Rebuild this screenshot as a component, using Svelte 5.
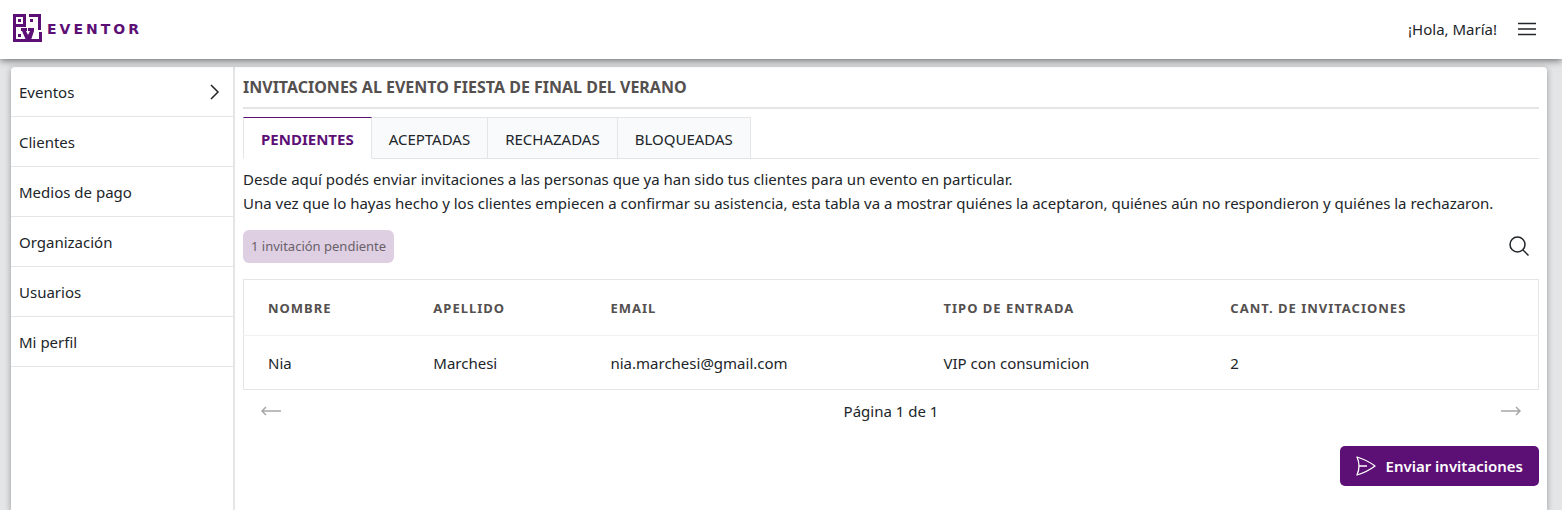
<script lang="ts">
	const menu = [
		{ name: 'Eventos', open: true },
		{ name: 'Clientes', open: false },
		{ name: 'Medios de pago', open: false },
		{ name: 'Organización', open: false },
		{ name: 'Usuarios', open: false },
		{ name: 'Mi perfil', open: false }
	];

	const tabs = ['Pendientes', 'Aceptadas', 'Rechazadas', 'Bloqueadas'];
	let active = $state('Pendientes');

	const guests = [
		{
			name: 'Nia',
			surname: 'Marchesi',
			email: 'nia.marchesi@gmail.com',
			ticket: 'VIP con consumicion',
			amount: 2
		}
	];
</script>

<div class="page">
	<header class="topbar">
		<a href="/" class="logo">
			<svg width="29" height="29" viewBox="0 0 29 29" aria-hidden="true">
				<g fill="#5c0f75">
					<path d="M0 0h13v13H3v12h23v-7h3v10H0zM3 3v7h7V3z" fill-rule="evenodd" />
					<path d="M16 0h12v16h-3V3h-9z" />
					<path d="M5 5h3v3H5zM17 5h3v3h-3zM5 20h3v3H5z" />
					<path d="M8 14h6v3h-1l2 4 2-4h-2v-3h6v3l-3 9h-5l-4-9H8z" />
				</g>
			</svg>
			<span class="wordmark">EVENTOR</span>
		</a>
		<div class="user">
			<span>¡Hola, María!</span>
			<button class="icon-btn" aria-label="Abrir menú">
				<svg width="20" height="16" viewBox="0 0 20 16" aria-hidden="true">
					<path d="M1 2.5h18M1 8h18M1 13.5h18" stroke="#212529" stroke-width="1.5" />
				</svg>
			</button>
		</div>
	</header>

	<div class="panel">
		<nav class="sidebar">
			{#each menu as item}
				<a href="/" class="menu-item">
					{item.name}
					{#if item.open}
						<svg width="12" height="16" viewBox="0 0 12 16" aria-hidden="true">
							<path d="M2 1l7 7-7 7" fill="none" stroke="#212529" stroke-width="1.5" />
						</svg>
					{/if}
				</a>
			{/each}
		</nav>

		<main class="content">
			<h1>Invitaciones al evento fiesta de final del verano</h1>

			<div class="tabs" role="tablist">
				{#each tabs as tab}
					<button
						class="tab"
						class:active={tab === active}
						role="tab"
						aria-selected={tab === active}
						onclick={() => (active = tab)}
					>
						{tab}
					</button>
				{/each}
			</div>

			<p class="intro">
				Desde aquí podés enviar invitaciones a las personas que ya han sido tus clientes para un evento en particular.<br />
				Una vez que lo hayas hecho y los clientes empiecen a confirmar su asistencia, esta tabla va a mostrar quiénes la aceptaron, quiénes aún no respondieron y quiénes la rechazaron.
			</p>

			<div class="toolbar">
				<span class="badge">1 invitación pendiente</span>
				<button class="icon-btn" aria-label="Buscar">
					<svg width="20" height="20" viewBox="0 0 20 20" aria-hidden="true">
						<circle cx="8.5" cy="8.5" r="7.5" fill="none" stroke="#212529" stroke-width="1.5" />
						<path d="M14 14l5.5 5.5" stroke="#212529" stroke-width="1.5" />
					</svg>
				</button>
			</div>

			<table>
				<thead>
					<tr>
						<th>Nombre</th>
						<th>Apellido</th>
						<th>Email</th>
						<th>Tipo de entrada</th>
						<th>Cant. de invitaciones</th>
					</tr>
				</thead>
				<tbody>
					{#each guests as guest}
						<tr>
							<td>{guest.name}</td>
							<td>{guest.surname}</td>
							<td>{guest.email}</td>
							<td>{guest.ticket}</td>
							<td>{guest.amount}</td>
						</tr>
					{/each}
				</tbody>
			</table>

			<div class="pager">
				<button class="icon-btn" aria-label="Página anterior" disabled>
					<svg width="20" height="10" viewBox="0 0 20 10" aria-hidden="true">
						<path d="M20 5H1M5 1L1 5l4 4" fill="none" stroke="#a6a6a6" stroke-width="1.5" />
					</svg>
				</button>
				<span>Página 1 de 1</span>
				<button class="icon-btn" aria-label="Página siguiente" disabled>
					<svg width="20" height="10" viewBox="0 0 20 10" aria-hidden="true">
						<path d="M0 5h19M15 1l4 4-4 4" fill="none" stroke="#a6a6a6" stroke-width="1.5" />
					</svg>
				</button>
			</div>

			<div class="actions">
				<button class="send">
					<svg width="20" height="20" viewBox="0 0 20 20" aria-hidden="true">
						<path
							d="M1 1Q11 4 19 10Q11 16 1 19Q5 10 1 1zM3 10h8"
							fill="none"
							stroke="#fff"
							stroke-width="1.3"
							stroke-linejoin="round"
						/>
					</svg>
					Enviar invitaciones
				</button>
			</div>
		</main>
	</div>
</div>

<style>
	:global(body) {
		margin: 0;
		background: #e4e5e7;
	}

	.page {
		display: flex;
		flex-direction: column;
		min-height: 100vh;
		box-sizing: border-box;
		font-family: 'Noto Sans', 'Open Sans', sans-serif;
		font-size: 15px;
		line-height: 24px;
		color: #212529;
	}

	button {
		font: inherit;
		color: inherit;
		cursor: pointer;
	}

	.topbar {
		position: relative;
		display: flex;
		align-items: center;
		justify-content: space-between;
		height: 59px;
		box-sizing: border-box;
		padding: 0 15px 2px 13px;
		background: #fff;
		box-shadow: 0 1px 8px rgba(0, 0, 0, 0.6);
	}

	.logo {
		display: flex;
		align-items: center;
		gap: 5px;
		color: #5c0f75;
		text-decoration: none;
	}

	.logo svg {
		display: block;
	}

	.wordmark {
		font-family: 'DejaVu Sans', sans-serif;
		font-size: 14px;
		font-weight: 700;
		letter-spacing: 3px;
	}

	.user {
		display: flex;
		align-items: center;
		gap: 10px;
	}

	.icon-btn {
		display: flex;
		align-items: center;
		padding: 10px;
		border: none;
		background: none;
	}

	.panel {
		display: flex;
		flex: 1;
		margin: 8px 15px 0 11px;
		background: #fff;
		border-radius: 4px 4px 0 0;
		box-shadow: 0 2px 6px rgba(0, 0, 0, 0.35);
	}

	.sidebar {
		width: 222px;
		flex-shrink: 0;
		border-right: 2px solid #e4e5e7;
	}

	.menu-item {
		display: flex;
		align-items: center;
		justify-content: space-between;
		height: 49px;
		padding: 0 12px 0 8px;
		border-bottom: 1px solid #e4e5e7;
		color: inherit;
		text-decoration: none;
	}

	.content {
		flex: 1;
		min-width: 0;
		padding: 8px;
	}

	h1 {
		margin: 0 0 8px;
		padding: 0 0 8px;
		border-bottom: 2px solid #e4e5e7;
		font-size: 16px;
		font-weight: 700;
		line-height: 24px;
		color: #54504f;
		text-transform: uppercase;
	}

	.tabs {
		display: flex;
		border-bottom: 1px solid #e4e5e7;
	}

	.tab {
		height: 42px;
		margin-bottom: -1px;
		padding: 2px 17px 0;
		border: 1px solid #e4e5e7;
		border-left: none;
		background: #f8fafc;
		text-transform: uppercase;
	}

	.tab:first-child {
		border-left: 1px solid #e4e5e7;
	}

	.tab.active {
		border-top-color: #5c0f75;
		border-bottom-color: #fff;
		background: #fff;
		color: #5c0f75;
		font-weight: 700;
	}

	.intro {
		margin: 8px 0 11px;
	}

	.toolbar {
		display: flex;
		align-items: center;
		justify-content: space-between;
		margin-bottom: 13px;
	}

	.badge {
		padding: 4px 8px 5px;
		border-radius: 6px;
		background: #decfe3;
		color: #6a6169;
		font-size: 13px;
	}

	table {
		width: 100%;
		border: 1px solid #e4e5e7;
		border-collapse: collapse;
		text-align: left;
	}

	th,
	td {
		padding: 0 24px;
	}

	th {
		height: 55px;
		border-bottom: 1px solid #f0f1f2;
		font-size: 13px;
		letter-spacing: 1px;
		color: #54504f;
		text-transform: uppercase;
	}

	td {
		height: 53px;
	}

	.pager {
		display: flex;
		align-items: center;
		justify-content: space-between;
		height: 42px;
		padding: 0 8px;
	}

	.actions {
		display: flex;
		justify-content: flex-end;
		margin-top: 14px;
	}

	.send {
		display: flex;
		align-items: center;
		gap: 10px;
		height: 40px;
		padding: 0 16px;
		border: none;
		border-radius: 5px;
		background: #5c0f75;
		color: #fff;
		font-weight: 600;
	}
</style>
